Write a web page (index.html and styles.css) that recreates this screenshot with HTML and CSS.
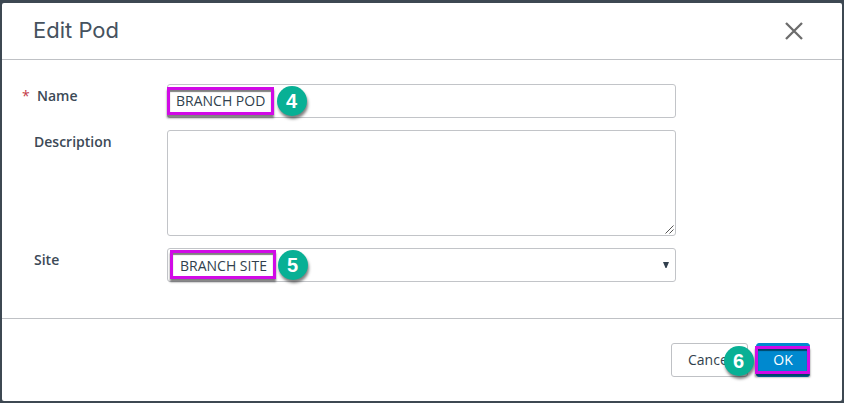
FILE: index.html
```html
<!DOCTYPE html>
<html lang="en">
<head>
<title>Edit Pod</title>
<meta charset="utf-8">
<link rel="stylesheet" href="styles.css">
</head>
<body>

<div class="dialog">
  <div class="header">
    <h1>Edit Pod</h1>
    <svg class="close" width="18" height="18" viewBox="0 0 18 18">
      <path d="M1 1L17 17M17 1L1 17" stroke="#6c6c6c" stroke-width="2.3" fill="none"/>
    </svg>
  </div>

  <form class="content">
    <div class="row">
      <label class="required"><span class="star">*</span>Name</label>
      <div class="field name">
        <span class="value">BRANCH POD</span>
        <span class="mark mark-name"></span>
        <span class="step step-name">4</span>
      </div>
    </div>
    <div class="row">
      <label>Description</label>
      <div class="field area">
        <svg class="grip" width="9" height="9" viewBox="0 0 9 9">
          <path d="M0.5 8.5L8.5 0.5M4.5 8.5L8.5 4.5" stroke="#555" stroke-width="1" fill="none"/>
        </svg>
      </div>
    </div>
    <div class="row">
      <label>Site</label>
      <div class="field site">
        <span class="value">BRANCH SITE</span>
        <svg class="arrow" width="6" height="6" viewBox="0 0 6 6">
          <path d="M0 0H6L3.5 6H2.5Z" fill="#313f4d"/>
        </svg>
        <span class="mark mark-site"></span>
        <span class="step step-site">5</span>
      </div>
    </div>
  </form>

  <div class="footer">
    <div class="button cancel">Cancel<span class="step step-ok">6</span></div>
    <div class="button ok">OK<span class="mark mark-ok"></span></div>
  </div>
</div>

</body>
</html>
```

FILE: styles.css
```css
html, body { height: 100%; }

body {
  margin: 0;
  padding: 3px 2px 2px;
  box-sizing: border-box;
  background: #3d4852;
  color: #313f4d;
  font-family: 'Open Sans', 'Noto Sans', sans-serif;
  font-size: 14px;
  overflow: hidden;
}

.dialog {
  display: flex;
  flex-direction: column;
  height: 398px;
  background: #fff;
  border-radius: 2px;
}

.header {
  display: flex;
  justify-content: space-between;
  align-items: center;
  height: 56px;
  padding: 0 39px 0 31px;
  border-bottom: 1px solid #bfc1c5;
}

h1 {
  margin: 0 0 2px;
  font-family: Inter, sans-serif;
  font-size: 22px;
  font-weight: 400;
  line-height: 30px;
  color: #46525e;
}

.close { display: block; }

.content {
  display: flex;
  flex-direction: column;
  gap: 12px;
  flex: 1;
  padding: 24px 0 0 32px;
}

.row { display: flex; }

label {
  width: 133px;
  padding-top: 2px;
  line-height: 20px;
  font-weight: 600;
  color: #3c4956;
}

.required { width: 145px; margin-left: -12px; }

.star { display: inline-block; width: 15px; color: #c23b47; font-weight: 400; }

.field {
  position: relative;
  display: flex;
  align-items: center;
  width: 509px;
  height: 34px;
  padding: 0 6px 2px 8px;
  border: 1px solid #c2c4c8;
  border-radius: 3px;
  box-sizing: border-box;
}

.area { height: 106px; align-items: flex-end; justify-content: flex-end; padding: 0 1px 1px; }

.site { justify-content: space-between; padding: 0 6px 0 12px; }

.footer {
  display: flex;
  justify-content: flex-end;
  gap: 8px;
  height: 58px;
  padding: 24px 32px 0 0;
  border-top: 1px solid #bfc1c5;
}

.button {
  position: relative;
  height: 34px;
  width: 77px;
  padding-left: 16px;
  border: 1px solid #bfc1c5;
  border-radius: 3px;
  box-sizing: border-box;
  line-height: 32px;
}

.ok {
  width: 54px;
  padding: 0;
  text-align: center;
  color: #fff;
  background: #0089cf;
  border-color: #0089cf;
}

/* numbered steps and the frames they point to */
.mark {
  position: absolute;
  border: 3px solid #d10ae6;
  box-sizing: border-box;
  box-shadow: 0 3px 2px rgba(0, 0, 0, 0.5), inset 0 2px 1px rgba(0, 0, 0, 0.5);
}

.mark-name { left: -1px; top: 2px; width: 107px; height: 28px; }
.mark-site { left: 2px; top: 1px; width: 106px; height: 29px; }
.mark-ok { left: -2px; top: 2px; width: 55px; height: 28px; }

.step {
  position: absolute;
  width: 30px;
  height: 30px;
  border-radius: 50%;
  background: #08b095;
  box-shadow: 1px 3px 3px rgba(0, 0, 0, 0.5);
  color: #fff;
  font: bold 20px/31px 'Liberation Sans', sans-serif;
  text-align: center;
}

.step-name { left: 108.5px; top: 1px; }
.step-site { left: 109.5px; top: 1px; }
.step-ok { left: 51.5px; top: 2px; }
```
